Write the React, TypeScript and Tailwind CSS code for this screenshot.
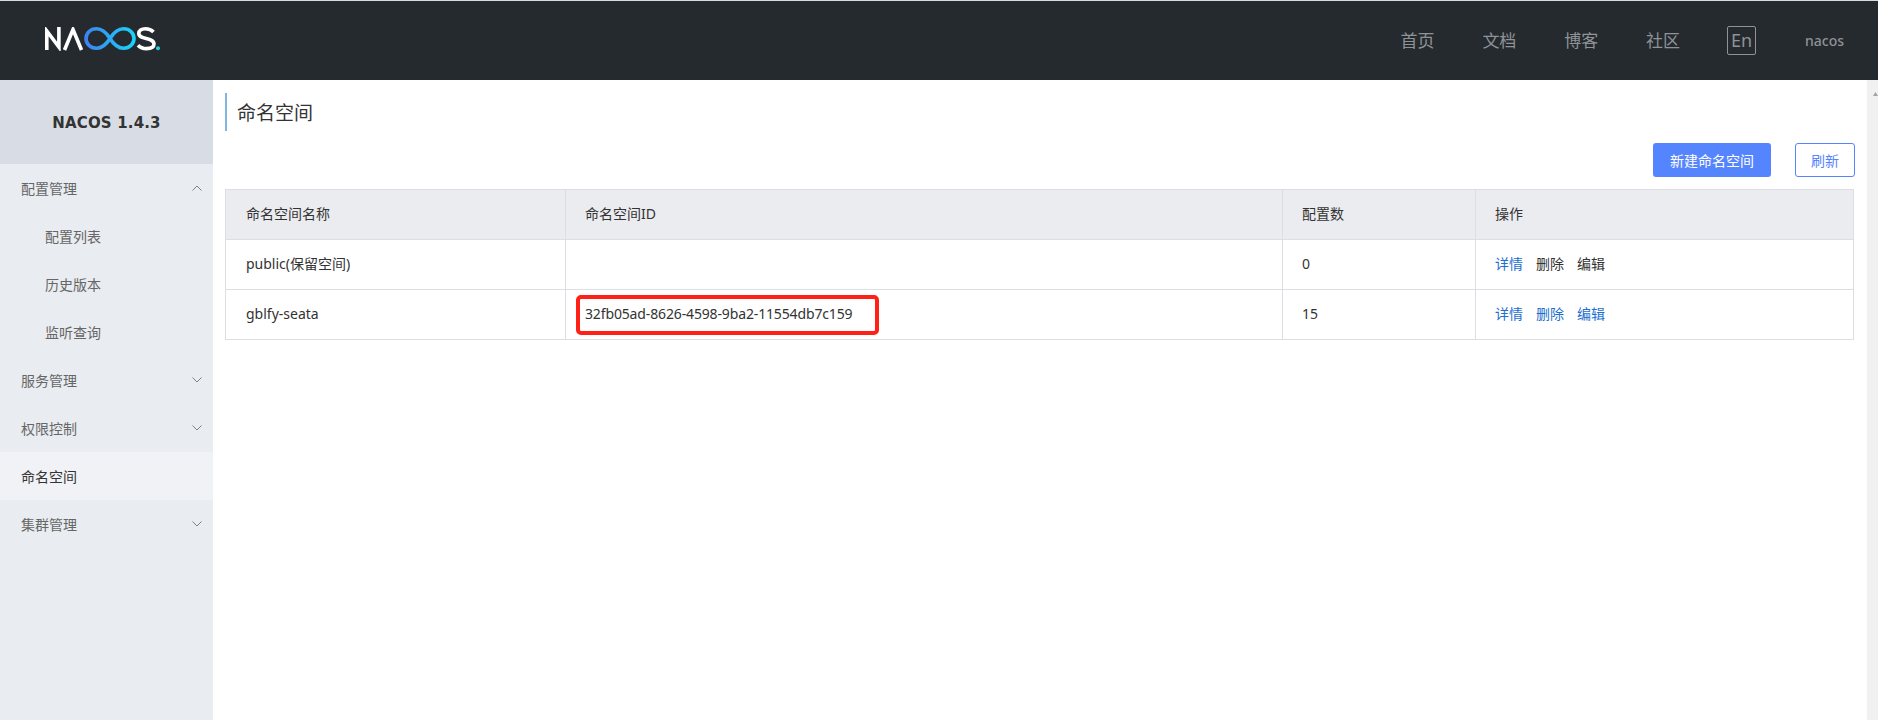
const cjk = "font-['Noto_Sans','Noto_Sans_CJK_SC',sans-serif]";

function Chevron({ up }: { up?: boolean }) {
  return (
    <svg width="10" height="6" viewBox="0 0 10 6" fill="none" stroke="#7d828a" strokeWidth="1">
      <polyline points={up ? "0.5,5.5 5,1 9.5,5.5" : "0.5,0.5 5,5 9.5,0.5"} />
    </svg>
  );
}

function Logo() {
  return (
    <svg className="mb-[3px]" width="116" height="24" viewBox="0 0 116 24" fill="none">
      <defs>
        <linearGradient id="lg" x1="40" y1="0" x2="90" y2="0" gradientUnits="userSpaceOnUse">
          <stop offset="0" stopColor="#3d82f0" />
          <stop offset="1" stopColor="#1cd3f8" />
        </linearGradient>
      </defs>
      <path d="M1.8 23 V4 L13.9 20 V0" stroke="#fff" strokeWidth="3.6" />
      <path d="M19.5 23 L28 2.5 L36.5 23" stroke="#fff" strokeWidth="3.6" />
      <path d="M65 11.5 C61 5 56 1.8 51.5 1.8 C45 1.8 41 6.5 41 11.5 C41 16.5 45 21.2 51.5 21.2 C56 21.2 61 18 65 11.5 C69 5 74 1.8 78.5 1.8 C85 1.8 89 6.5 89 11.5 C89 16.5 85 21.2 78.5 21.2 C74 21.2 69 18 65 11.5 Z" stroke="url(#lg)" strokeWidth="3.6" />
      <path d="M108.5 5 C106.5 3 103.5 1.8 100.5 1.8 C96.5 1.8 93.8 3.6 93.8 6.6 C93.8 13 109 10 109 17 C109 20.2 105.5 21.6 101.5 21.6 C98 21.6 95 20.4 93 18.2" stroke="#fff" strokeWidth="3.6" />
      <circle cx="113" cy="21.3" r="2" fill="#22cfe0" />
    </svg>
  );
}

const menu: { label: string; sub?: boolean; chev?: "up" | "down"; active?: boolean }[] = [
  { label: "配置管理", chev: "up" },
  { label: "配置列表", sub: true },
  { label: "历史版本", sub: true },
  { label: "监听查询", sub: true },
  { label: "服务管理", chev: "down" },
  { label: "权限控制", chev: "down" },
  { label: "命名空间", active: true },
  { label: "集群管理", chev: "down" },
];

function Actions({ blue }: { blue?: boolean }) {
  return (
    <div className="flex gap-[13px]">
      <span className="text-[#1e6fd0]">详情</span>
      <span className={blue ? "text-[#1e6fd0]" : "text-[#333]"}>删除</span>
      <span className={blue ? "text-[#1e6fd0]" : "text-[#333]"}>编辑</span>
    </div>
  );
}

const th = "border border-[#dcdee3] bg-[#ebecf0] pb-[2px] pl-[19px] text-left font-normal text-[#333]";
const td = "border border-[#dcdee3] pb-[2px] pl-[19px] text-[#333]";

export default function App() {
  return (
    <div className={`${cjk} flex h-[720px] w-[1878px] flex-col overflow-hidden bg-white text-[14px]`}>
      <div className="h-px bg-[#d9dcdf]" />
      <header className="flex h-[79px] items-center justify-between bg-[#252a2f] pl-[45px] pr-[34px]">
        <Logo />
        <nav className="flex items-center text-[#8f9296]">
          <div className="flex items-center gap-[47.8px] text-[17px]">
            <span>首页</span>
            <span>文档</span>
            <span>博客</span>
            <span>社区</span>
          </div>
          <span className="ml-[47px] flex h-[29px] w-[29px] items-center justify-center rounded-[2px] border border-[#8f9296] text-[18px]">En</span>
          <span className="ml-[49px] text-[14px] font-medium">nacos</span>
        </nav>
      </header>
      <div className="flex min-h-0 flex-1">
        <aside className="w-[213px] shrink-0 bg-[#e9ecf1]">
          <div className="flex h-[84px] items-center justify-center bg-[#d8dde5] pt-[2px] font-['DejaVu_Sans',sans-serif] text-[15px] font-bold tracking-[0.15px] text-[#333]">NACOS 1.4.3</div>
          {menu.map((m) => (
            <div
              key={m.label}
              className={`flex h-[48px] items-center justify-between pr-[11px] ${m.sub ? "pl-[45px]" : "pl-[21px]"} ${m.active ? "bg-[#f0f2f6] text-[#333]" : "text-[#666]"}`}
            >
              <span>{m.label}</span>
              {m.chev && <Chevron up={m.chev === "up"} />}
            </div>
          ))}
        </aside>
        <main className="min-w-0 flex-1 pl-[12px] pr-[13px] pt-[13px]">
          <div className="flex h-[38px] items-center border-l-2 border-[#80b5e4] pl-[10px] pt-[2px] text-[19px] text-[#333]">命名空间</div>
          <div className="mr-[-1px] mt-[12px] flex justify-end gap-[24px]">
            <button className="h-[34px] w-[118px] rounded-[3px] bg-[#5584ff] text-white">新建命名空间</button>
            <button className="h-[34px] w-[60px] rounded-[3px] border border-[#5584ff] text-[#5584ff]">刷新</button>
          </div>
          <table className="mt-[12px] w-full table-fixed border-collapse">
            <colgroup>
              <col className="w-[340px]" />
              <col className="w-[717px]" />
              <col className="w-[193px]" />
              <col />
            </colgroup>
            <thead>
              <tr className="h-[50px]">
                <th className={`${th} pl-[20px]`}>命名空间名称</th>
                <th className={th}>命名空间ID</th>
                <th className={th}>配置数</th>
                <th className={th}>操作</th>
              </tr>
            </thead>
            <tbody>
              <tr className="h-[50px]">
                <td className={`${td} pl-[20px]`}>public(保留空间)</td>
                <td className={td}></td>
                <td className={td}>0</td>
                <td className={td}><Actions /></td>
              </tr>
              <tr className="h-[50px]">
                <td className={`${td} pl-[20px]`}>gblfy-seata</td>
                <td className={`${td} relative tracking-[-0.14px]`}>
                  32fb05ad-8626-4598-9ba2-11554db7c159
                  <span className="absolute left-[10px] top-[5px] h-[40px] w-[303px] rounded-[5px] border-[4px] border-[#ff2016]" />
                </td>
                <td className={td}>15</td>
                <td className={td}><Actions blue /></td>
              </tr>
            </tbody>
          </table>
        </main>
        <div className="relative w-[11px] shrink-0 bg-[#f1f1f1]">
          <svg className="absolute left-[6px] top-[12px]" width="5" height="4" viewBox="0 0 5 4"><polygon points="2.5,0 5,4 0,4" fill="#a3a3a3" /></svg>
        </div>
      </div>
    </div>
  );
}
